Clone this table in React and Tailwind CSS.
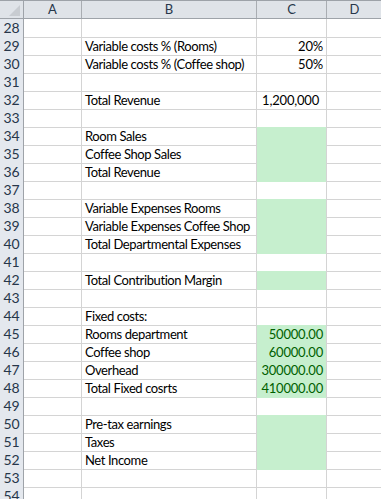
import React from 'react';

const rows = [
  { n: 28 },
  { n: 29, label: 'Variable costs % (Rooms)', value: '20%' },
  { n: 30, label: 'Variable costs % (Coffee shop)', value: '50%' },
  { n: 31 },
  { n: 32, label: 'Total Revenue', value: '1,200,000', acct: true },
  { n: 33 },
  { n: 34, label: 'Room Sales', green: true },
  { n: 35, label: 'Coffee Shop Sales', green: true },
  { n: 36, label: 'Total Revenue', green: true },
  { n: 37 },
  { n: 38, label: 'Variable Expenses Rooms', green: true },
  { n: 39, label: 'Variable Expenses Coffee Shop', green: true },
  { n: 40, label: 'Total Departmental Expenses', green: true },
  { n: 41 },
  { n: 42, label: 'Total Contribution Margin', green: true },
  { n: 43 },
  { n: 44, label: 'Fixed costs:' },
  { n: 45, label: 'Rooms department', value: '50000.00', green: true },
  { n: 46, label: 'Coffee shop', value: '60000.00', green: true },
  { n: 47, label: 'Overhead', value: '300000.00', green: true },
  { n: 48, label: 'Total Fixed cosrts', value: '410000.00', green: true },
  { n: 49 },
  { n: 50, label: 'Pre-tax earnings', green: true },
  { n: 51, label: 'Taxes', green: true },
  { n: 52, label: 'Net Income', green: true },
  { n: 53 },
  { n: 54 },
];

const cols = 'grid grid-cols-[24px_58px_175px_70px_1fr]';
const font = { fontFamily: 'Lato, "Liberation Sans", sans-serif' };

export default function App() {
  return (
    <div className="w-[381px] h-[499px] overflow-hidden bg-white text-[13px] text-black" style={font}>
      {/* column headers */}
      <div className={`${cols} h-[19px] border-t border-[#9da2a8] bg-[#dfe3e8] border-b border-b-[#9ea3a9] text-[#27364a]`}>
        <div className="relative border-r border-[#9ea3a9]">
          <svg width="11" height="11" className="absolute right-[3px] bottom-[2px]">
            <polygon points="11,0 11,11 0,11" fill="#c8ccd1" />
          </svg>
        </div>
        <div className="border-r border-[#a9adb2] flex items-center justify-center leading-none">A</div>
        <div className="border-r border-[#a9adb2] flex items-center justify-center leading-none">B</div>
        <div className="border-r border-[#a9adb2] flex items-center justify-center leading-none">C</div>
        <div className="border-r border-[#a9adb2] w-[56px] flex items-center justify-center leading-none">D</div>
      </div>

      {rows.map((r) => (
        <div key={r.n} className={`${cols} h-[18px]`}>
          <div className="bg-[#e4e8ee] border-r border-[#9ea3a9] border-b border-b-[#c5c9cf] flex items-end justify-center leading-[18px] text-[14px] text-[#27364a]">
            {r.n}
          </div>
          <div className="border-r border-b border-[#d4d4d4]" />
          <div className="border-r border-b border-[#d4d4d4] pl-[3px] leading-[18px] tracking-[-0.4px] whitespace-nowrap overflow-hidden">
            {r.label}
          </div>
          <div
            className={
              r.green
                ? 'bg-[#c6efce] text-[#006100] border-r border-[#d4d4d4] text-right pr-[3px] leading-[18px] tracking-[-0.2px] whitespace-nowrap'
                : `border-r border-b border-[#d4d4d4] text-right leading-[18px] tracking-[-0.2px] whitespace-nowrap ${r.acct ? 'pr-[7px]' : 'pr-[3px]'}`
            }
          >
            {r.value}
          </div>
          <div className="border-b border-[#d4d4d4] w-[56px] border-r" />
        </div>
      ))}
    </div>
  );
}
